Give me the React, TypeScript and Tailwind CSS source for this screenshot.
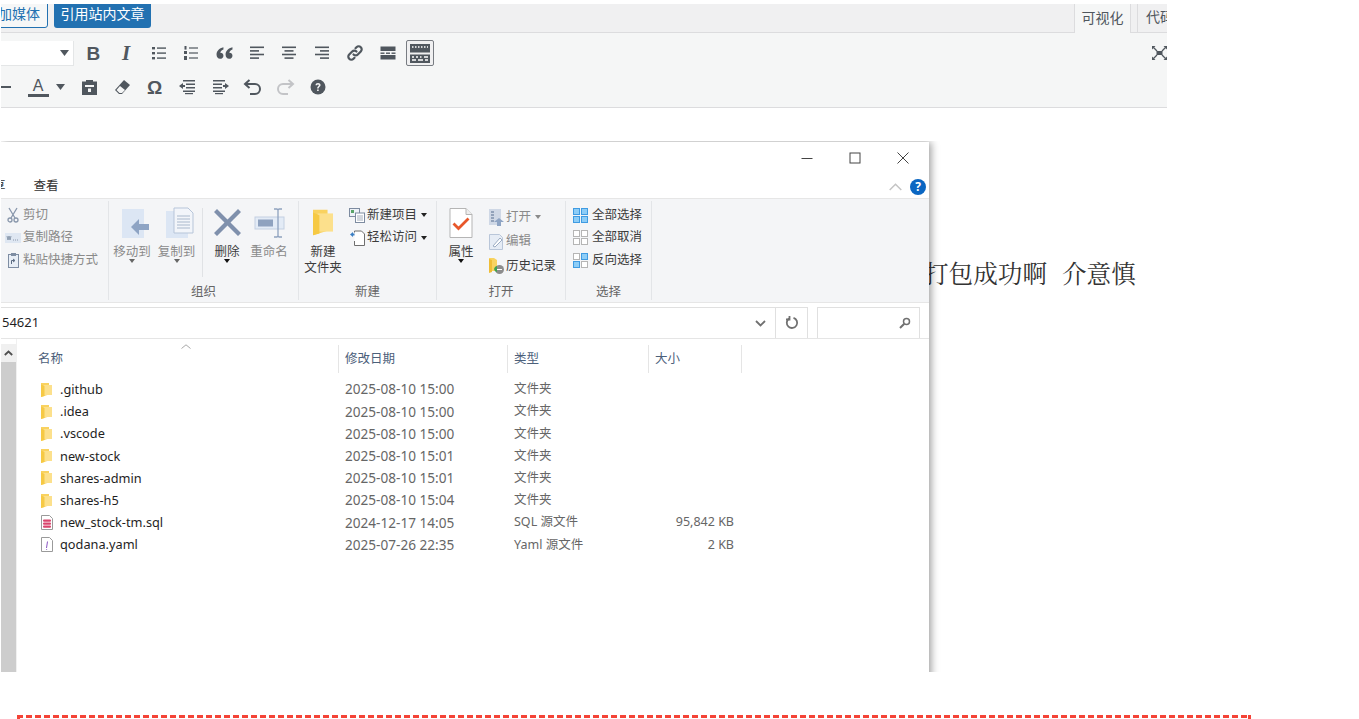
import type { ReactNode } from 'react';

const UI_FONT = "font-['Noto_Sans','Noto_Sans_CJK_SC',sans-serif]";

const FILES = [
  { name: '.github', date: '2025-08-10 15:00', type: '文件夹', size: '', kind: 'folder' },
  { name: '.idea', date: '2025-08-10 15:00', type: '文件夹', size: '', kind: 'folder' },
  { name: '.vscode', date: '2025-08-10 15:00', type: '文件夹', size: '', kind: 'folder' },
  { name: 'new-stock', date: '2025-08-10 15:01', type: '文件夹', size: '', kind: 'folder' },
  { name: 'shares-admin', date: '2025-08-10 15:01', type: '文件夹', size: '', kind: 'folder' },
  { name: 'shares-h5', date: '2025-08-10 15:04', type: '文件夹', size: '', kind: 'folder' },
  { name: 'new_stock-tm.sql', date: '2024-12-17 14:05', type: 'SQL 源文件', size: '95,842 KB', kind: 'sql' },
  { name: 'qodana.yaml', date: '2025-07-26 22:35', type: 'Yaml 源文件', size: '2 KB', kind: 'yaml' },
];

/* ---------- editor toolbar icons ---------- */

function Tb({ children, w = 'w-[32.7px]' }: { children: ReactNode; w?: string }) {
  return <div className={`${w} h-[26px] flex items-center justify-center shrink-0 text-[#50575e]`}>{children}</div>;
}

function Lines({ rows }: { rows: [number, number][] }) {
  return (
    <svg width="16" height="16" viewBox="0 0 16 16" fill="#50575e">
      {rows.map(([x, w], i) => (
        <rect key={i} x={x} y={1.5 + i * 3.6} width={w} height="1.6" />
      ))}
    </svg>
  );
}

function Caret({ color = '#50575e' }: { color?: string }) {
  return (
    <svg width="9" height="6" viewBox="0 0 9 6">
      <path d="M0 0h9L4.5 6z" fill={color} />
    </svg>
  );
}

function EditorToolbar() {
  return (
    <div className="flex-1 bg-[#f5f6f6] border-b border-[#dcdcde] relative">
      <div className="flex items-center pt-[7px]">
        <div className="w-[73px] h-[25px] bg-white border-r border-b border-[#e4e6e7] flex items-center justify-end pr-[4px] shrink-0">
          <Caret />
        </div>
        <div className="w-[3px] shrink-0" />
        <Tb><span className="font-['Liberation_Sans',sans-serif] font-bold text-[19px] leading-none">B</span></Tb>
        <Tb><span className="font-['Liberation_Serif',serif] italic font-bold text-[21px] leading-none">I</span></Tb>
        <Tb>
          <svg width="16" height="16" viewBox="0 0 16 16" fill="#50575e">
            <rect x="1" y="2" width="3" height="2.4" /><rect x="1" y="7" width="3" height="2.4" /><rect x="1" y="12" width="3" height="2.4" />
            <rect x="6" y="2.4" width="9" height="1.4" /><rect x="6" y="7.4" width="9" height="1.4" /><rect x="6" y="12.4" width="9" height="1.4" />
          </svg>
        </Tb>
        <Tb>
          <svg width="16" height="16" viewBox="0 0 16 16" fill="#50575e">
            <rect x="1.5" y="1" width="2" height="3.6" /><rect x="1" y="6" width="3" height="3" /><rect x="1" y="11" width="3" height="4" />
            <rect x="6" y="2.4" width="9" height="1.2" /><rect x="6" y="7.4" width="9" height="1.2" /><rect x="6" y="12.4" width="9" height="1.2" />
          </svg>
        </Tb>
        <Tb>
          <svg width="17" height="14" viewBox="0 0 16 13" fill="#50575e">
            <path d="M7 1C3 2 .5 4.5.5 8c0 2.500 1.300 4 3.300 4C5.600 12 7 10.800 7 9S5.700 6.200 4 6.300C4.300 5 5.500 3.800 7 3.200zM15.500 1c-4 1-6.500 3.500-6.500 7 0 2.500 1.300 4 3.300 4 1.800 0 3.200-1.200 3.200-3s-1.300-2.800-3-2.700c.3-1.300 1.500-2.500 3-3.100z" />
          </svg>
        </Tb>
        <Tb><Lines rows={[[1, 14], [1, 9], [1, 14], [1, 9]]} /></Tb>
        <Tb><Lines rows={[[1, 14], [3.500, 9], [1, 14], [3.500, 9]]} /></Tb>
        <Tb><Lines rows={[[1, 14], [6, 9], [1, 14], [6, 9]]} /></Tb>
        <Tb>
          <svg width="18" height="18" viewBox="0 0 18 18" fill="none" stroke="#50575e" strokeWidth="2.200" strokeLinecap="round">
            <path d="M7.500 10.500a3 3 0 0 0 4.300 0l3-3a3 3 0 0 0-4.300-4.300l-1 1" />
            <path d="M10.500 7.500a3 3 0 0 0-4.300 0l-3 3a3 3 0 0 0 4.300 4.300l1-1" />
          </svg>
        </Tb>
        <Tb>
          <svg width="16" height="14" viewBox="0 0 16 14" fill="#50575e">
            <rect x="0.500" y="0.500" width="15" height="4.500" /><rect x="0.500" y="9" width="15" height="4.500" />
            <rect x="0.500" y="6.500" width="4" height="1.400" /><rect x="6" y="6.500" width="4" height="1.400" /><rect x="11.500" y="6.500" width="4" height="1.400" />
          </svg>
        </Tb>
        <div className="w-[28px] h-[26px] ml-[2px] rounded-[2px] border border-[#787c82] bg-[#f0f0f1] flex items-center justify-center shrink-0">
          <svg width="20" height="19" viewBox="0 0 20 19">
            <rect width="20" height="8.500" fill="#50575e" />
            <rect y="10.500" width="20" height="8.500" fill="#50575e" />
            <path d="M2 3h1.500M5 3h1.500M8 3h1.500M11 3h1.500M14 3h1.500M17 3h1M2 13h2M6 13h2M10 13h1.500M14 13h4M2 16h4M8 16h5M15 16h3" stroke="#fff" strokeWidth="1.300" />
          </svg>
        </div>
      </div>
      <div className="flex items-center mt-[8px]">
        <div className="w-[21px] shrink-0 flex items-center">
          <div className="w-[10px] h-[2px] bg-[#50575e]" />
        </div>
        <Tb w="w-[32px]">
          <span className="flex flex-col items-center text-[#50575e]">
            <span className="font-['Liberation_Sans',sans-serif] text-[16px] leading-[15px]">A</span>
            <span className="block w-[21px] h-[3px] bg-[#50575e] mt-[1px]" />
          </span>
        </Tb>
        <div className="w-[19px] shrink-0 flex justify-start pl-[2px]"><Caret /></div>
        <Tb>
          <svg width="17" height="17" viewBox="0 0 17 17" fill="#50575e">
            <path d="M1 2.500h4V1h7v1.500h4V16H1z" />
            <path d="M4 6h9v2H4z M7 9.500h3V13H7z" fill="#f5f6f6" />
          </svg>
        </Tb>
        <Tb>
          <svg width="17" height="16" viewBox="0 0 17 16">
            <path d="M10 1 16 6 8 15H5L1 11z" fill="#50575e" />
            <path d="M6 7l5 4-3 3H5.500L2.500 11z" fill="#f5f6f6" />
          </svg>
        </Tb>
        <Tb><span className="font-['Liberation_Sans',sans-serif] text-[19px] leading-none font-bold">Ω</span></Tb>
        <Tb>
          <svg width="17" height="16" viewBox="0 0 17 16" fill="#50575e">
            <rect x="4" y="1" width="12" height="1.500" /><rect x="7" y="4.500" width="9" height="1.500" /><rect x="7" y="8" width="9" height="1.500" />
            <rect x="4" y="11.500" width="12" height="1.500" /><rect x="6" y="14" width="8" height="1.200" />
            <path d="M0 7l4-3v2h2v2H4v2z" />
          </svg>
        </Tb>
        <Tb>
          <svg width="17" height="16" viewBox="0 0 17 16" fill="#50575e">
            <rect x="1" y="1" width="12" height="1.500" /><rect x="1" y="4.500" width="9" height="1.500" /><rect x="1" y="8" width="9" height="1.500" />
            <rect x="1" y="11.500" width="12" height="1.500" /><rect x="3" y="14" width="8" height="1.200" />
            <path d="M17 7l-4-3v2h-2v2h2v2z" />
          </svg>
        </Tb>
        <Tb>
          <svg width="19" height="16" viewBox="0 0 19 16" fill="none" stroke="#50575e" strokeWidth="2">
            <path d="M2.500 5H12a5 5 0 0 1 0 10H7" />
            <path d="M6.500 1 2 5l4.500 4" />
          </svg>
        </Tb>
        <Tb>
          <svg width="19" height="16" viewBox="0 0 19 16" fill="none" stroke="#c3c4c7" strokeWidth="2">
            <path d="M16.500 5H7a5 5 0 0 0 0 10h5" />
            <path d="M12.500 1 17 5l-4.500 4" />
          </svg>
        </Tb>
        <Tb>
          <svg width="16" height="16" viewBox="0 0 16 16">
            <circle cx="8" cy="8" r="7.500" fill="#50575e" />
            <path d="M5.500 6.200C5.500 4.700 6.600 4 8 4s2.600.8 2.600 2.100c0 1.700-2 1.700-2 3.500H7.100c0-2.400 1.800-2.500 1.800-3.400 0-.5-.4-.8-.9-.8-.6 0-1 .3-1 .8z M7.100 10.500h1.600V12H7.100z" fill="#f5f6f6" />
          </svg>
        </Tb>
      </div>
      <div className="absolute top-[12px] right-0 w-[16px] overflow-hidden">
        <svg width="17" height="16" viewBox="0 0 17 16">
          <path d="M1 1h3.500L1 4.500zM16 1h-3.500L16 4.500zM1 15h3.500L1 11.500zM16 15h-3.500L16 11.500z" fill="#50575e" />
          <path d="M2.500 2.500 6 6M14.500 2.500 11 6M2.500 13.500 6 10M14.500 13.500 11 10" stroke="#50575e" strokeWidth="1.300" fill="none" />
          <rect x="5.500" y="6" width="6" height="4" fill="#50575e" />
        </svg>
      </div>
    </div>
  );
}

function Editor() {
  return (
    <div className="w-[1166px] h-[104px] mt-[4px] ml-px flex flex-col overflow-hidden shrink-0 font-['Noto_Sans_CJK_SC',sans-serif]">
      <div className="h-[29px] bg-[#f0f0f1] border-b border-[#dcdcde] flex items-start shrink-0">
        <div className="-ml-[25px] -mt-[5px] h-[29px] flex items-center px-[7px] bg-[#f6f7f7] border border-[#2271b1] rounded-[3px] text-[#2271b1] text-[14px] whitespace-nowrap">添加媒体</div>
        <div className="ml-[6px] -mt-[5px] h-[29px] w-[97px] flex items-center justify-center bg-[#2271b1] rounded-[3px] text-white text-[14px] whitespace-nowrap">引用站内文章</div>
        <div className="flex-1" />
        <div className="h-[29px] pb-[3px] w-[57px] flex items-center justify-center bg-[#f5f6f6] border-l border-r border-[#dcdcde] text-[#50575e] text-[14px]">可视化</div>
        <div className="h-[28px] pb-[3px] w-[30px] ml-[6px] pl-[8px] border-l border-[#dcdcde] overflow-hidden flex items-center text-[#50575e] text-[14px] whitespace-nowrap">代码</div>
      </div>
      <EditorToolbar />
    </div>
  );
}

/* ---------- explorer icons ---------- */

function FolderGlyph({ w, h }: { w: number; h: number }) {
  return (
    <svg width={w} height={h} viewBox="0 0 11 14">
      <path d="M0 0h8v11.500L0 14z" fill="#f9d25f" />
      <path d="M2.500 2H11v10H2.500z" fill="#fce08c" />
      <path d="M0 1.500 3.500 3v10L0 14z" fill="#f6c944" />
    </svg>
  );
}

function SmallCaret({ color }: { color: string }) {
  return (
    <svg width="6" height="4" viewBox="0 0 6 4">
      <path d="M0 0h6L3 4z" fill={color} />
    </svg>
  );
}

function RibbonRow({ icon, label, dim, caret, gap = 'mr-[1px]' }: { icon: ReactNode; label: string; dim?: boolean; caret?: boolean; gap?: string }) {
  return (
    <div className="flex items-center h-[22.5px] whitespace-nowrap">
      <span className={`w-[18px] flex justify-center shrink-0 ${gap}`}>{icon}</span>
      <span className={dim ? 'text-[#8a8a8a]' : 'text-[#3c3c3c]'}>{label}</span>
      {caret && <span className="ml-[4px] flex"><SmallCaret color={dim ? '#8a8a8a' : '#222'} /></span>}
    </div>
  );
}

function BigBtn({ icon, lines, dim, caret, w, iconShift = '' }: { icon: ReactNode; lines: string[]; dim?: boolean; caret?: boolean; w: string; iconShift?: string }) {
  return (
    <div className={`${w} flex flex-col items-center shrink-0`}>
      <div className={`h-[35px] flex items-center justify-center ${iconShift}`}>{icon}</div>
      <div className={`mt-[4px] flex flex-col items-center leading-[16px] whitespace-nowrap ${dim ? 'text-[#8a8a8a]' : 'text-[#3c3c3c]'}`}>
        {lines.map((l) => <span key={l}>{l}</span>)}
      </div>
      {caret && <span className="flex -mt-px"><SmallCaret color={dim ? '#666' : '#111'} /></span>}
    </div>
  );
}

function Group({ w, label, children }: { w: string; label: string; children: ReactNode }) {
  return (
    <div className={`${w} flex flex-col border-r border-[#e3e5e8] my-[2px] shrink-0`}>
      <div className="flex-1 flex min-h-0">{children}</div>
      <div className="h-[17px] text-center text-[#666] leading-[17px]">{label}</div>
    </div>
  );
}

function SelectGrid({ cells }: { cells: string[] }) {
  return (
    <svg width="15" height="15" viewBox="0 0 15 15">
      {cells.map((c, i) => (
        <rect key={i} x={(i % 2) * 8 + 0.500} y={Math.floor(i / 2) * 8 + 0.500} width="6" height="6" fill={c === 'on' ? '#8dcdf7' : '#fff'} stroke={c === 'on' ? '#3f9be2' : '#b5b5b5'} />
      ))}
    </svg>
  );
}

function Ribbon() {
  return (
    <div className="h-[105px] bg-[#f4f5f7] border-t border-b border-[#e6e6e6] flex text-[12.5px] shrink-0">
      <Group w="w-[108px]" label="">
        <div className="flex flex-col pl-[3px] pt-[3px]">
          <RibbonRow
            dim
            label="剪切"
            icon={
              <svg width="12" height="16" viewBox="0 0 12 16" fill="none" stroke="#8896ab" strokeWidth="1.300">
                <path d="M2 1l6 10M10 1 4 11" />
                <circle cx="3" cy="13" r="2" /><circle cx="9" cy="13" r="2" />
              </svg>
            }
          />
          <RibbonRow
            dim
            label="复制路径"
            icon={
              <svg width="16" height="10" viewBox="0 0 16 10">
                <rect width="16" height="10" fill="#dfe7f2" />
                <path d="M2 3l1 4 1-4 1 4 1-4M8 7h1M10 7h1M12 7h1" stroke="#76869c" strokeWidth="0.800" fill="none" />
              </svg>
            }
          />
          <RibbonRow
            dim
            label="粘贴快捷方式"
            icon={
              <svg width="11" height="15" viewBox="0 0 11 15">
                <rect x="0.500" y="1.500" width="10" height="13" fill="#e8eef6" stroke="#7e8da3" />
                <rect x="3" y="0" width="5" height="3" fill="#7e8da3" />
                <path d="M3.500 11V7.500h3M5 6l2 1.500L5 9" stroke="#5c6b82" fill="none" />
              </svg>
            }
          />
        </div>
      </Group>
      <Group w="w-[190px]" label="组织">
        <div className="flex pt-[4px] pl-px">
          <BigBtn
            w="w-[44px]"
            dim
            caret
            iconShift="ml-[6px]"
            lines={['移动到']}
            icon={
              <svg width="30" height="30" viewBox="0 0 30 30">
                <rect x="2" y="1" width="22" height="29" fill="#dce6f4" />
                <path d="M29 16H19v-5l-8 8 8 8v-5h10z" fill="#8ea4c4" />
              </svg>
            }
          />
          <BigBtn
            w="w-[45px]"
            dim
            caret
            iconShift="ml-[6px]"
            lines={['复制到']}
            icon={
              <svg width="30" height="32" viewBox="0 0 30 32">
                <rect x="1" y="4" width="22" height="27" fill="#dce6f4" />
                <path d="M9 1h14l5 5v20H9z" fill="#f2f5fa" stroke="#b7c5d9" />
                <path d="M12 9h13M12 12h13M12 15h13M12 18h13M12 21h13" stroke="#a9b8cc" />
              </svg>
            }
          />
          <div className="w-px h-[69px] mt-[3px] bg-[#e0e2e5] ml-[3px] mr-[2px] shrink-0" />
          <BigBtn
            w="w-[44px]"
            caret
            lines={['删除']}
            icon={
              <svg width="27" height="27" viewBox="0 0 27 27">
                <path d="M3 0 13.500 10.500 24 0l3 3-10.500 10.500L27 24l-3 3-10.500-10.500L3 27l-3-3 10.500-10.500L0 3z" fill="#7f90ac" />
              </svg>
            }
          />
          <BigBtn
            w="w-[40px]"
            dim
            lines={['重命名']}
            icon={
              <svg width="31" height="30" viewBox="0 0 31 30">
                <rect x="1" y="9" width="29" height="12" fill="#e3ebf6" stroke="#c3d0e2" />
                <rect x="4" y="11.500" width="15" height="7" fill="#8fa2bf" />
                <path d="M20 1h3l1 1 1-1h3M24 2v26M20 29h3l1-1 1 1h3" stroke="#8fa2bf" fill="none" strokeWidth="1.300" />
              </svg>
            }
          />
        </div>
      </Group>
      <Group w="w-[138px]" label="新建">
        <div className="flex pt-[4px] pl-[2px]">
          <BigBtn w="w-[44px]" lines={['新建', '文件夹']} icon={<FolderGlyph w={20} h={29} />} />
          <div className="flex flex-col -mt-px ml-[3px]">
            <RibbonRow
              label="新建项目"
              caret
              icon={
                <svg width="16" height="15" viewBox="0 0 16 15">
                  <rect x="0.500" y="0.500" width="10" height="8" fill="#eef2f7" stroke="#7d8ba0" />
                  <rect x="2" y="2" width="3" height="3" fill="#5aa469" />
                  <rect x="6.500" y="5" width="9" height="9.500" fill="#fff" stroke="#7d8ba0" />
                  <path d="M8 8h6M8 10h6M8 12h6" stroke="#a4aebc" />
                </svg>
              }
            />
            <RibbonRow
              label="轻松访问"
              caret
              icon={
                <svg width="15" height="16" viewBox="0 0 15 16">
                  <path d="M4.500 2.500V1h7l3 3v11.500h-10V11" fill="#fff" stroke="#6f6f6f" />
                  <path d="M0 4.500 3 2v1.500h1.500v2H3V7z" fill="#3c7fc4" />
                </svg>
              }
            />
          </div>
        </div>
      </Group>
      <Group w="w-[129px]" label="打开">
        <div className="flex pt-[4px] pl-[2px]">
          <BigBtn
            w="w-[44px]"
            caret
            lines={['属性']}
            icon={
              <svg width="24" height="30" viewBox="0 0 24 30">
                <path d="M1 .5h16l6 6v23H1z" fill="#fff" stroke="#b5b5b5" />
                <path d="M17 .5v6h6" fill="#eee" stroke="#b5b5b5" />
                <path d="M4.500 15.500l5 5 10-10" stroke="#e8572a" strokeWidth="2.800" fill="none" />
              </svg>
            }
          />
          <div className="flex flex-col ml-[4px]">
            <div className="h-[24.5px] pt-px"><RibbonRow dim caret label="打开" icon={
              <svg width="15" height="17" viewBox="0 0 15 17">
                <rect width="12" height="16" fill="#cfd8e6" />
                <path d="M2 3h3M2 6h3M2 9h3M2 12h3" stroke="#7f90ac" strokeWidth="1.500" />
                <path d="M10 9l5 4h-3v4H8v-4H5z" fill="#8ea4c4" />
              </svg>
            } /></div>
            <div className="h-[24.5px] pt-px"><RibbonRow dim label="编辑" icon={
              <svg width="15" height="16" viewBox="0 0 15 16">
                <path d="M.5.5h10l3 3v12H.5z" fill="#e6ecf5" stroke="#b9c6d9" />
                <path d="M4 12l7-8 2 2-7 7z" fill="#fff" stroke="#9cacc3" />
              </svg>
            } /></div>
            <div className="h-[24.5px] pt-px"><RibbonRow label="历史记录" icon={
              <svg width="15" height="16" viewBox="0 0 15 16">
                <path d="M0 0h5l3 2v11H0z" fill="#f8d361" />
                <path d="M0 1l3 1v12l-3 1z" fill="#efbd36" />
                <circle cx="10.500" cy="11.500" r="4.500" fill="#8d8d8d" />
                <path d="M5 11a3.500 3.500 0 0 1 3-3v6a3.500 3.500 0 0 1-3-3z" fill="#3fa34d" />
                <path d="M8 11.500h5" stroke="#fff" />
              </svg>
            } /></div>
          </div>
        </div>
      </Group>
      <Group w="w-[86px]" label="选择">
        <div className="flex flex-col pl-[5px] pt-[3px]">
          <RibbonRow gap="mr-[3px]" label="全部选择" icon={<SelectGrid cells={['on', 'on', 'on', 'on']} />} />
          <RibbonRow gap="mr-[3px]" label="全部取消" icon={<SelectGrid cells={['off', 'off', 'off', 'off']} />} />
          <RibbonRow gap="mr-[3px]" label="反向选择" icon={<SelectGrid cells={['off', 'on', 'on', 'off']} />} />
        </div>
      </Group>
    </div>
  );
}

function FileIcon({ kind }: { kind: string }) {
  if (kind === 'folder') return <FolderGlyph w={11} h={14} />;
  return (
    <svg width="12" height="15" viewBox="0 0 12 15">
      <path d="M.5.5h8l3 3v11H.5z" fill="#fff" stroke="#9a9a9a" />
      {kind === 'sql' ? (
        <g fill="#d9446c">
          <rect x="2" y="4.500" width="8" height="2.200" rx="1" />
          <rect x="2" y="7.500" width="8" height="2.200" rx="1" />
          <rect x="2" y="10.500" width="8" height="2.200" rx="1" />
        </g>
      ) : (
        <path d="M6.500 4.500 5.500 11M5.300 12.500h.8" stroke="#8a55c2" fill="none" />
      )}
    </svg>
  );
}

function FileList() {
  return (
    <div className="flex-1 flex min-h-0">
      <div className="w-[15px] shrink-0 flex flex-col pt-[5px]">
        <div className="h-[18px] bg-[#f0f0f0] flex items-center justify-center">
          <svg width="9" height="6" viewBox="0 0 9 6" fill="none" stroke="#505050" strokeWidth="1.800">
            <path d="M.8 5 4.500 1.500 8.200 5" />
          </svg>
        </div>
        <div className="flex-1 bg-[#cdcdcd]" />
      </div>
      <div className="w-[2px] border-l border-[#f0f0f0] shrink-0" />
      <div className="flex-1 relative text-[12.5px]">
        <svg className="absolute left-[163px] top-[5px]" width="10" height="5" viewBox="0 0 10 5" fill="none" stroke="#a8a8a8">
          <path d="M.5 4.500 5 .8l4.500 3.700" />
        </svg>
        <div className="grid grid-cols-[321px_169px_141px_93px] h-[34px] items-stretch text-[#4c607a] pt-[6px] mb-[5.5px]">
          <div className="border-r border-[#e5e5e5] pl-[20px] flex items-center">名称</div>
          <div className="border-r border-[#e5e5e5] pl-[6px] flex items-center">修改日期</div>
          <div className="border-r border-[#e5e5e5] pl-[6px] flex items-center">类型</div>
          <div className="border-r border-[#e5e5e5] pl-[6px] flex items-center">大小</div>
        </div>
        {FILES.map((f) => (
          <div key={f.name} className="grid grid-cols-[321px_169px_141px_93px] h-[22.2px] items-center text-[#666]">
            <div className="flex items-center pl-[23px] text-[#1f1f1f] text-[12.75px]">
              <span className="w-[19px] flex shrink-0"><FileIcon kind={f.kind} /></span>
              {f.name}
            </div>
            <div className="pl-[6px] text-[13.6px]">{f.date}</div>
            <div className="pl-[6px]">{f.type}</div>
            <div className="text-right pr-[8px]">{f.size}</div>
          </div>
        ))}
      </div>
    </div>
  );
}

function ExplorerWindow() {
  return (
    <div className="w-[940px] h-[531px] ml-px pt-px overflow-hidden shrink-0 relative z-10">
      <div className={`w-[928px] h-[560px] bg-white shadow-[2px_0_8px_rgba(0,0,0,0.4)] flex flex-col overflow-hidden ${UI_FONT}`}>
        <div className="h-[33px] pb-[2px] pr-[2px] flex justify-end shrink-0">
          {['min', 'max', 'close'].map((b) => (
            <div key={b} className="w-[48px] flex items-center justify-center">
              <svg width="12" height="12" viewBox="0 0 12 12" fill="none" stroke="#444">
                {b === 'min' && <path d="M0.500 6.500h11" />}
                {b === 'max' && <rect x="1" y="1" width="10" height="10" />}
                {b === 'close' && <path d="M.5.5l11 11M11.500.5l-11 11" />}
              </svg>
            </div>
          ))}
        </div>
        <div className="h-[23px] flex items-center text-[12.5px] text-[#333] shrink-0 pr-[3px]">
          <span className="-ml-[8px] whitespace-nowrap">享</span>
          <span className="ml-[28px]">查看</span>
          <span className="flex-1" />
          <svg width="13" height="8" viewBox="0 0 13 8" fill="none" stroke="#c4c4c4" strokeWidth="1.500">
            <path d="M.7 7 6.500 1.300 12.300 7" />
          </svg>
          <span className="ml-[8px] w-[16px] h-[16px] rounded-full bg-[#0a66c2] text-white text-[12px] font-bold flex items-center justify-center">?</span>
        </div>
        <Ribbon />
        <div className="h-[31px] mt-[4px] flex text-[13px] text-[#1f1f1f] shrink-0 border-b border-[#e5e5e5] box-content pb-0">
          <div className="w-[775px] border-t border-r border-[#e0e0e0] flex items-center justify-between pr-[9px]">
            <span className="pl-[1px]">54621</span>
            <svg width="11" height="7" viewBox="0 0 11 7" fill="none" stroke="#707070" strokeWidth="1.800">
              <path d="M1 1l4.500 4.500L10 1" />
            </svg>
          </div>
          <div className="w-[32px] border-t border-r border-[#e0e0e0] flex items-center justify-center">
            <svg width="14" height="14" viewBox="0 0 14 14" fill="none" stroke="#707070" strokeWidth="1.800">
              <path d="M4 2.500a5.200 5.200 0 1 0 4.500-.7" />
              <path d="M4.500 0v3.500H1" />
            </svg>
          </div>
          <div className="w-[103px] ml-[9px] border-t border-l border-r border-[#e0e0e0] flex items-center justify-end pr-[8px]">
            <svg width="12" height="12" viewBox="0 0 12 12" fill="none" stroke="#707070">
              <circle cx="7.500" cy="4.500" r="3" strokeWidth="1.500" />
              <path d="M5.300 6.800 1 11" strokeWidth="2" />
            </svg>
          </div>
        </div>
        <FileList />
      </div>
    </div>
  );
}

export default function App() {
  return (
    <div className="w-[1359px] h-[719px] bg-white overflow-hidden flex flex-col">
      <Editor />
      <div className="flex items-start mt-[33px] h-[531px] shrink-0">
        <ExplorerWindow />
        <p className="-ml-[17px] mt-[118px] text-[24.6px] leading-[28px] text-[#333] whitespace-nowrap flex font-['Noto_Serif_CJK_SC','Noto_Sans_CJK_SC',serif]">
          <span>打包成功啊</span>
          <span className="ml-[15px]">介意慎</span>
        </p>
      </div>
      <div className="ml-[17px] w-[1234px] h-[4px] mt-[43px] border-x-[3px] border-[#f44336] shrink-0">
        <div className="h-[3px] bg-[repeating-linear-gradient(90deg,#f44336_0_3px,transparent_3px_6px,#f44336_6px_9px)]" />
      </div>
    </div>
  );
}
